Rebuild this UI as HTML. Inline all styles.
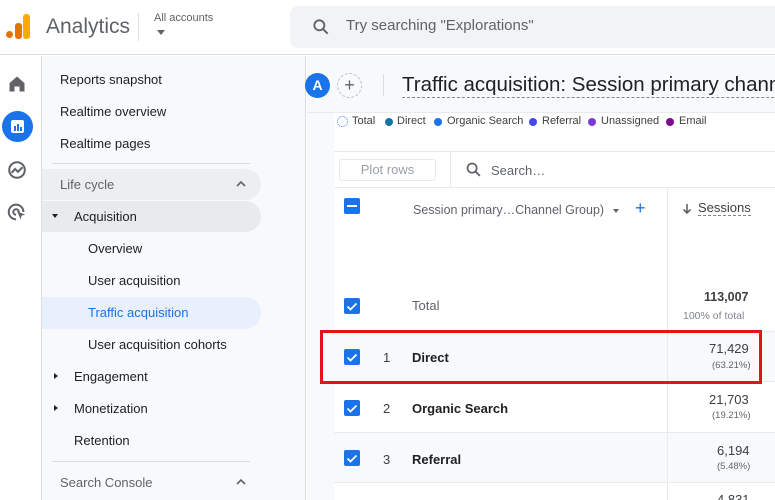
<!DOCTYPE html>
<html><head><meta charset="utf-8"><style>
*{margin:0;padding:0;box-sizing:border-box}
body{width:775px;height:500px;overflow:hidden;background:#fff;font-family:"Liberation Sans",Arial,sans-serif;color:#202124;position:relative}
.a{position:absolute}
.t{font-size:13px}
.cb{position:absolute;width:16px;height:16px;background:#1a73e8;border-radius:2px}
.cb svg{position:absolute;left:0;top:0}
.lg{position:absolute;top:115px;font-size:11px;color:#3c4043;white-space:nowrap}
</style></head><body>
<div class="a" style="left:0;top:0;width:775px;height:500px;overflow:hidden">
<!-- top bar -->
<div class="a" style="left:0;top:0;width:775px;height:55px;background:#fff;border-bottom:1px solid #dadce0"></div>
<div class="a" style="left:6px;top:31px;width:7px;height:7px;border-radius:4px;background:#e37400"></div>
<div class="a" style="left:15px;top:23px;width:7px;height:16px;border-radius:3px;background:#e37400"></div>
<div class="a" style="left:23px;top:14px;width:7px;height:25px;border-radius:3px;background:#f9ab00"></div>
<div class="a" style="left:46px;top:15px;font-size:21px;color:#5f6368">Analytics</div>
<div class="a" style="left:138px;top:13px;width:1px;height:28px;background:#dadce0"></div>
<div class="a" style="left:154px;top:12px;font-size:11px;color:#5f6368">All accounts</div>
<div class="a" style="left:157px;top:30px;width:0;height:0;border-left:4px solid transparent;border-right:4px solid transparent;border-top:5px solid #5f6368"></div>
<div class="a" style="left:290px;top:6px;width:490px;height:42px;background:#f1f3f4;border-radius:8px"></div>
<svg class="a" style="left:311px;top:17px" width="20" height="20" viewBox="0 0 24 24"><circle cx="10" cy="10" r="6" fill="none" stroke="#5f6368" stroke-width="2.2"/><path d="M14.5 14.5L20 20" stroke="#5f6368" stroke-width="2.4"/></svg>
<div class="a" style="left:346px;top:17px;font-size:15px;color:#5f6368">Try searching "Explorations"</div>
<!-- rail -->
<div class="a" style="left:0;top:56px;width:42px;height:444px;background:#fff;border-right:1px solid #dadce0"></div>
<svg class="a" style="left:7px;top:74px" width="20" height="20" viewBox="0 0 24 24"><path d="M3 11L12 3l9 8v10h-6v-6H9v6H3z" fill="#5f6368"/></svg>
<div class="a" style="left:2px;top:111px;width:31px;height:31px;border-radius:50%;background:#1a73e8"></div>
<div class="a" style="left:11px;top:120px;width:13px;height:13px;background:#fff;border-radius:2px"></div>
<div class="a" style="left:14px;top:126px;width:1.5px;height:5px;background:#1a73e8"></div>
<div class="a" style="left:17px;top:124px;width:1.5px;height:7px;background:#1a73e8"></div>
<div class="a" style="left:20px;top:127px;width:1.5px;height:4px;background:#1a73e8"></div>
<svg class="a" style="left:6px;top:159px" width="22" height="22" viewBox="0 0 24 24"><circle cx="12" cy="12" r="8.5" fill="none" stroke="#5f6368" stroke-width="2.2"/><path d="M6 15l4-4 3 3 5-5" fill="none" stroke="#5f6368" stroke-width="2.2"/></svg>
<svg class="a" style="left:6px;top:201px" width="22" height="22" viewBox="0 0 24 24"><path d="M11 20a8 8 0 1 1 8-8" fill="none" stroke="#5f6368" stroke-width="2.2"/><path d="M11 15a3 3 0 1 1 3-3" fill="none" stroke="#5f6368" stroke-width="2.2"/><path d="M12 11l9 4-4 1-1 4z" fill="#5f6368"/></svg>
<!-- nav -->
<div class="a" style="left:42px;top:56px;width:264px;height:444px;background:#f8f9fa;border-right:1px solid #dadce0"></div>
<div class="a" style="left:42px;top:169px;width:219px;height:31px;background:#eceef0;border-radius:0 16px 16px 0"></div>
<div class="a" style="left:42px;top:201px;width:219px;height:31px;background:#e8eaed;border-radius:0 16px 16px 0"></div>
<div class="a" style="left:42px;top:297px;width:219px;height:32px;background:#e8f0fe;border-radius:0 16px 16px 0"></div>
<div class="a" style="left:52px;top:163px;width:198px;height:1px;background:#dadce0"></div>
<div class="a" style="left:52px;top:461px;width:198px;height:1px;background:#dadce0"></div>
<div class="a t" style="left:60px;top:72px">Reports snapshot</div>
<div class="a t" style="left:60px;top:104px">Realtime overview</div>
<div class="a t" style="left:60px;top:136px">Realtime pages</div>
<div class="a t" style="left:60px;top:177px;color:#5f6368">Life cycle</div>
<svg class="a" style="left:236px;top:180px" width="10" height="7" viewBox="0 0 10 7"><path d="M1 6l4-4 4 4" fill="none" stroke="#5f6368" stroke-width="1.6"/></svg>
<div class="a" style="left:52px;top:214px;width:0;height:0;border-left:3px solid transparent;border-right:3px solid transparent;border-top:4px solid #202124"></div>
<div class="a t" style="left:74px;top:209px">Acquisition</div>
<div class="a t" style="left:88px;top:241px">Overview</div>
<div class="a t" style="left:88px;top:273px">User acquisition</div>
<div class="a t" style="left:88px;top:305px;color:#1a73e8">Traffic acquisition</div>
<div class="a t" style="left:88px;top:337px">User acquisition cohorts</div>
<div class="a" style="left:54px;top:373px;width:0;height:0;border-top:3px solid transparent;border-bottom:3px solid transparent;border-left:4px solid #202124"></div>
<div class="a t" style="left:74px;top:369px">Engagement</div>
<div class="a" style="left:54px;top:405px;width:0;height:0;border-top:3px solid transparent;border-bottom:3px solid transparent;border-left:4px solid #202124"></div>
<div class="a t" style="left:74px;top:401px">Monetization</div>
<div class="a t" style="left:74px;top:433px">Retention</div>
<div class="a t" style="left:60px;top:475px;color:#5f6368">Search Console</div>
<svg class="a" style="left:236px;top:478px" width="10" height="7" viewBox="0 0 10 7"><path d="M1 6l4-4 4 4" fill="none" stroke="#5f6368" stroke-width="1.6"/></svg>
<!-- content -->
<div class="a" style="left:307px;top:56px;width:468px;height:444px;background:#f8f9fa"></div>
<div class="a" style="left:307px;top:112px;width:468px;height:1px;background:#e8eaed"></div>
<div class="a" style="left:334px;top:113px;width:441px;height:387px;background:#fff"></div>
<div class="a" style="left:305px;top:73px;width:25px;height:25px;border-radius:50%;background:#1a73e8;color:#fff;font-size:14px;font-weight:bold;text-align:center;line-height:25px">A</div>
<div class="a" style="left:337px;top:73px;width:25px;height:25px;border-radius:50%;border:1px dashed #bdc1c6;color:#5f6368;font-size:18px;text-align:center;line-height:22px">+</div>
<div class="a" style="left:383px;top:74px;width:1px;height:22px;background:#dadce0"></div>
<div class="a" style="left:402px;top:72px;font-size:20.5px;white-space:nowrap;border-bottom:1px dashed #80868b;line-height:25px">Traffic acquisition: Session primary channel group</div>
<div class="a" style="left:337px;top:116px;width:11px;height:11px;border-radius:50%;border:1.5px dotted #4285f4"></div>
<div class="lg" style="left:352px">Total</div>
<div class="a" style="left:385px;top:118px;width:8px;height:8px;border-radius:50%;background:#1175a6"></div>
<div class="lg" style="left:397px">Direct</div>
<div class="a" style="left:434px;top:118px;width:8px;height:8px;border-radius:50%;background:#1a73e8"></div>
<div class="lg" style="left:447px">Organic Search</div>
<div class="a" style="left:529px;top:118px;width:8px;height:8px;border-radius:50%;background:#4648ee"></div>
<div class="lg" style="left:542px">Referral</div>
<div class="a" style="left:588px;top:118px;width:8px;height:8px;border-radius:50%;background:#7a39d9"></div>
<div class="lg" style="left:601px">Unassigned</div>
<div class="a" style="left:666px;top:118px;width:8px;height:8px;border-radius:50%;background:#7b0c8c"></div>
<div class="lg" style="left:679px">Email</div>
<div class="a" style="left:334px;top:151px;width:441px;height:1px;background:#e8eaed"></div>
<div class="a" style="left:339px;top:159px;width:97px;height:22px;border:1px solid #e8eaed;border-radius:3px;font-size:13px;color:#9aa0a6;text-align:center;line-height:20px">Plot rows</div>
<div class="a" style="left:450px;top:152px;width:1px;height:36px;background:#e8eaed"></div>
<svg class="a" style="left:465px;top:161px" width="17" height="17" viewBox="0 0 24 24"><circle cx="10" cy="10" r="6.5" fill="none" stroke="#5f6368" stroke-width="2.4"/><path d="M14.5 14.5L21 21" stroke="#5f6368" stroke-width="2.6"/></svg>
<div class="a" style="left:491px;top:163px;font-size:13px;color:#5f6368">Search…</div>
<div class="a" style="left:334px;top:187px;width:441px;height:1px;background:#e8eaed"></div>
<div class="a" style="left:667px;top:188px;width:1px;height:312px;background:#e8eaed"></div>
<div class="cb" style="left:344px;top:198px"><div style="position:absolute;left:3px;top:7px;width:10px;height:2px;background:#fff"></div></div>
<div class="a" style="left:413px;top:203px;font-size:12.5px;color:#5f6368;white-space:nowrap">Session primary…Channel Group)</div>
<div class="a" style="left:613px;top:209px;width:0;height:0;border-left:3px solid transparent;border-right:3px solid transparent;border-top:4px solid #5f6368"></div>
<div class="a" style="left:635px;top:198px;font-size:18px;color:#1a73e8">+</div>
<svg class="a" style="left:682px;top:203px" width="10" height="12" viewBox="0 0 10 12"><path d="M5 1v9M1.5 6.5L5 10l3.5-3.5" fill="none" stroke="#5f6368" stroke-width="1.6"/></svg>
<div class="a" style="left:698px;top:200px;font-size:13px;color:#3c4043;border-bottom:1px dashed #80868b">Sessions</div>
<div class="cb" style="left:344px;top:298px"><svg width="16" height="16"><path d="M3.5 8.5l3 3 6-6" fill="none" stroke="#fff" stroke-width="1.8"/></svg></div>
<div class="a" style="left:412px;top:298px;font-size:13px;color:#5f6368">Total</div>
<div class="a" style="left:704px;top:290px;font-size:12.5px;font-weight:bold;color:#3c4043">113,007</div>
<div class="a" style="left:683px;top:310px;font-size:10.5px;color:#80868b">100% of total</div>
<div class="a" style="left:334px;top:331px;width:441px;height:51px;background:#f8f9fa;border-top:1px solid #e8eaed;border-bottom:1px solid #e8eaed"></div>
<div class="a" style="left:334px;top:432px;width:441px;height:51px;background:#f8f9fa;border-top:1px solid #e8eaed;border-bottom:1px solid #e8eaed"></div>
<div class="a" style="left:667px;top:331px;width:1px;height:152px;background:#e8eaed"></div>
<div class="cb" style="left:344px;top:349px"><svg width="16" height="16"><path d="M3.5 8.5l3 3 6-6" fill="none" stroke="#fff" stroke-width="1.8"/></svg></div>
<div class="a" style="left:383px;top:350px;font-size:13px;color:#3c4043">1</div>
<div class="a" style="left:412px;top:350px;font-size:13px;font-weight:bold;color:#202124">Direct</div>
<div class="a" style="left:709px;top:341px;font-size:13px;color:#3c4043">71,429</div>
<div class="a" style="left:712px;top:360px;font-size:9.5px;color:#5f6368">(63.21%)</div>
<div class="cb" style="left:344px;top:400px"><svg width="16" height="16"><path d="M3.5 8.5l3 3 6-6" fill="none" stroke="#fff" stroke-width="1.8"/></svg></div>
<div class="a" style="left:383px;top:401px;font-size:13px;color:#3c4043">2</div>
<div class="a" style="left:412px;top:401px;font-size:13px;font-weight:bold;color:#202124">Organic Search</div>
<div class="a" style="left:709px;top:392px;font-size:13px;color:#3c4043">21,703</div>
<div class="a" style="left:712px;top:410px;font-size:9.5px;color:#5f6368">(19.21%)</div>
<div class="cb" style="left:344px;top:450px"><svg width="16" height="16"><path d="M3.5 8.5l3 3 6-6" fill="none" stroke="#fff" stroke-width="1.8"/></svg></div>
<div class="a" style="left:383px;top:452px;font-size:13px;color:#3c4043">3</div>
<div class="a" style="left:412px;top:452px;font-size:13px;font-weight:bold;color:#202124">Referral</div>
<div class="a" style="left:717px;top:443px;font-size:13px;color:#3c4043">6,194</div>
<div class="a" style="left:717px;top:461px;font-size:9.5px;color:#5f6368">(5.48%)</div>
<div class="a" style="left:717px;top:492px;font-size:13px;color:#3c4043">4,831</div>
<div class="a" style="left:320px;top:330px;width:442px;height:54px;border:3px solid #e3121b"></div>
</div>
</body></html>
